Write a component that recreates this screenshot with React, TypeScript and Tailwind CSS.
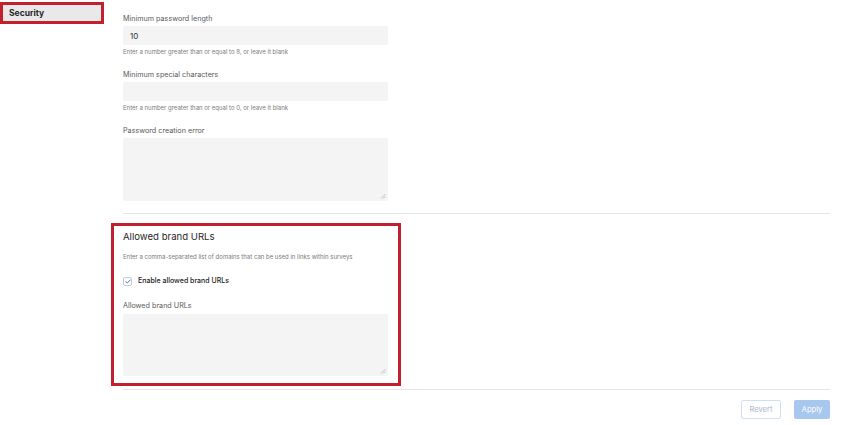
import React from "react";

function Area({ h, mt }: { h: string; mt: string }) {
  return (
    <div className={`relative w-[265px] ${h} ${mt}`}>
      <textarea className="w-full h-full bg-[#f4f4f4] rounded-[2px] outline-none block resize-none" />
      <svg className="absolute right-[2px] bottom-[2px]" width="6" height="6" viewBox="0 0 6 6">
        <path d="M1 5.5 L5.5 1 M3.3 5.5 L5.5 3.3" stroke="#b5b5b5" strokeWidth="0.8" />
      </svg>
    </div>
  );
}

export default function App() {
  return (
    <div className="w-[850px] h-[425px] bg-white flex font-['Inter','Liberation_Sans',sans-serif] overflow-hidden">
      <div className="w-[111px] shrink-0 pt-[2px]">
        <div className="w-[104px] h-[22px] border-[3px] border-[#c3202f] bg-[#e9e9e9] flex items-center pl-[6px] text-[8.5px] font-bold text-[#262626]">
          Security
        </div>
      </div>
      <div className="flex-1 pr-[20px] flex flex-col">
        <div className="pl-[12px] flex flex-col">
          <div className="mt-[13px] h-[12px] leading-[12px] text-[7.2px] text-[#5a5a5a]">Minimum password length</div>
          <input
            className="mt-[1px] w-[265px] h-[19px] bg-[#f4f4f4] rounded-[2px] pl-[7px] text-[8px] text-[#333] outline-none"
            defaultValue="10"
          />
          <div className="mt-[2px] h-[10px] leading-[10px] text-[6px] text-[#7a7a7a]">Enter a number greater than or equal to 8, or leave it blank</div>
          <div className="mt-[12px] h-[12px] leading-[12px] text-[7.2px] text-[#5a5a5a]">Minimum special characters</div>
          <input className="mt-[1px] w-[265px] h-[19px] bg-[#f4f4f4] rounded-[2px] pl-[7px] text-[8px] text-[#333] outline-none" />
          <div className="mt-[2px] h-[10px] leading-[10px] text-[6px] text-[#7a7a7a]">Enter a number greater than or equal to 0, or leave it blank</div>
          <div className="mt-[12px] h-[12px] leading-[12px] text-[7.2px] text-[#5a5a5a]">Password creation error</div>
          <Area h="h-[63px]" mt="mt-[1px]" />
          <div className="mt-[12px] h-[1px] bg-[#e6e6ea]" />
        </div>
        <div className="mt-[9px] w-[290px] h-[163px] border-[3px] border-[#c3202f] pl-[9px] flex flex-col">
          <div className="mt-[4px] h-[14px] leading-[14px] text-[9.6px] text-[#1f1f1f]">Allowed brand URLs</div>
          <div className="mt-[8px] h-[10px] leading-[10px] text-[6px] text-[#7a7a7a]">Enter a comma-separated list of domains that can be used in links within surveys</div>
          <div className="mt-[14px] h-[10px] flex items-center">
            <div className="w-[9px] h-[9px] rounded-[2px] border border-[#c9c9cf] bg-white flex items-center justify-center">
              <svg width="6" height="5" viewBox="0 0 6 5" fill="none">
                <path d="M0.8 2.6 L2.3 4 L5.2 1" stroke="#2f7be0" strokeWidth="1" strokeLinecap="round" strokeLinejoin="round" />
              </svg>
            </div>
            <span className="ml-[6px] text-[7px] font-medium text-[#222]">Enable allowed brand URLs</span>
          </div>
          <div className="mt-[14px] h-[12px] leading-[12px] text-[7.2px] text-[#5a5a5a]">Allowed brand URLs</div>
          <Area h="h-[62px]" mt="mt-[2px]" />
        </div>
        <div className="ml-[12px] mt-[3px] h-[1px] bg-[#e6e6ea]" />
        <div className="mt-[10px] flex justify-end gap-[13px]">
          <button className="w-[40px] h-[19px] border border-[#cfe0f6] rounded-[2px] bg-white text-[7.5px] text-[#a9b8cc]">Revert</button>
          <button className="w-[36px] h-[19px] rounded-[2px] bg-[#a8c7ef] text-[7.5px] text-white">Apply</button>
        </div>
      </div>
    </div>
  );
}
